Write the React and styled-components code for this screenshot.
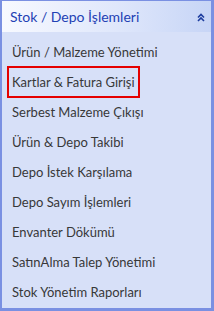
import React from "react"
import styled, { createGlobalStyle } from "styled-components"

const GlobalStyle = createGlobalStyle`
  html, body {
    margin: 0;
    padding: 0;
    background: #ffffff;
  }
  body {
    font-family: Lato, "Open Sans", sans-serif;
  }
`

const Panel = styled.div`
  width: 214px;
  height: 311px;
  box-sizing: border-box;
  border-style: solid;
  border-color: #7a90e2;
  border-width: 1px 3px 3px 2px;
  background: #d7e0f8;
  display: flex;
  flex-direction: column;
`

const Header = styled.div`
  height: 31px;
  flex: none;
  display: flex;
  align-items: center;
  justify-content: space-between;
  padding: 0 6px 0 8px;
  background: linear-gradient(to right, #f7f9ff 0%, #dfe7fb 55%, #c7d5f6 100%);
  color: #2241b4;
  font-size: 14px;
  cursor: pointer;
`

const Title = styled.span`
  letter-spacing: 0;
`

const Chevron = styled.svg`
  width: 8px;
  height: 9px;
  margin-top: 1px;
`

const List = styled.ul`
  list-style: none;
  margin: 0;
  padding: 5px 0 0 5px;
`

const Row = styled.li`
  height: 30px;
  display: flex;
  align-items: center;
`

const Link = styled.a`
  display: inline-block;
  padding: 0 3px;
  line-height: 28px;
  font-size: 13px;
  color: #383838;
  text-decoration: none;
  border: 2px solid ${p => (p.$active ? "#e50000" : "transparent")};
`

const items = [
  "Ürün / Malzeme Yönetimi",
  "Kartlar & Fatura Girişi",
  "Serbest Malzeme Çıkışı",
  "Ürün & Depo Takibi",
  "Depo İstek Karşılama",
  "Depo Sayım İşlemleri",
  "Envanter Dökümü",
  "SatınAlma Talep Yönetimi",
  "Stok Yönetim Raporları",
]

export default function App() {
  return (
    <>
      <GlobalStyle />
      <Panel>
        <Header>
          <Title>Stok / Depo İşlemleri</Title>
          <Chevron viewBox="0 0 8 9">
            <path
              d="M1 4.5 L4 1.5 L7 4.5 M1 8 L4 5 L7 8"
              fill="none"
              stroke="#1c3c9e"
              strokeWidth="1.6"
            />
          </Chevron>
        </Header>
        <List>
          {items.map((label, i) => (
            <Row key={label}>
              <Link href="#" $active={i === 1}>
                {label}
              </Link>
            </Row>
          ))}
        </List>
      </Panel>
    </>
  )
}
